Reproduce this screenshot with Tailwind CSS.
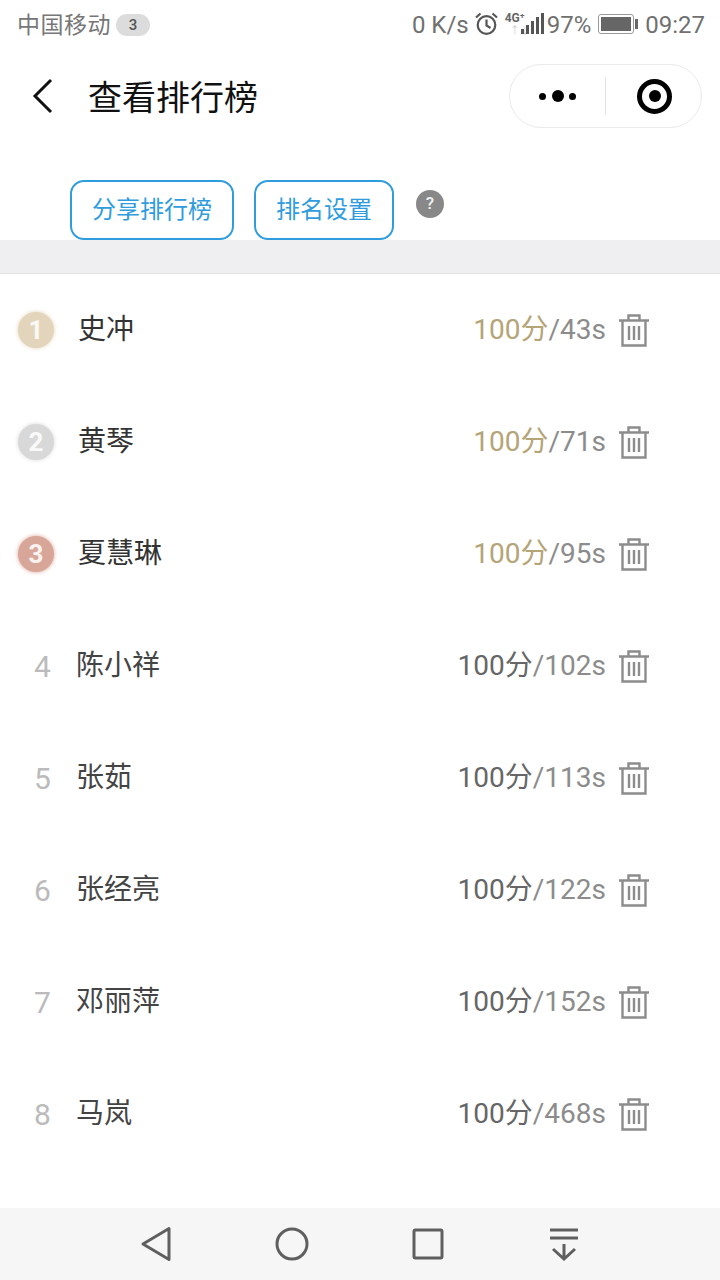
<!DOCTYPE html>
<html lang="zh-CN">
<head>
  <meta charset="UTF-8">
  <meta name="viewport" content="width=device-width, initial-scale=1.0">
  <title>查看排行榜</title>
  <script src="https://cdn.jsdelivr.net/npm/@tailwindcss/browser@4"></script>
</head>
<body class="bg-white font-['Roboto','Noto_Sans_CJK_SC',sans-serif]">
  <svg class="hidden">
    <symbol id="trash" viewBox="0 0 32 34">
      <path d="M1 7.5h30M10.5 7V2.5h11V7M4.5 8v24.5h23V8M11 13v14M16 13v14M21 13v14" fill="none" stroke="#8c8c8c" stroke-width="2.4"/>
    </symbol>
  </svg>
  <div class="w-[720px] h-[1280px] flex flex-col overflow-hidden">
    <!-- Status bar -->
    <div class="h-[48px] pt-[2px] flex items-center pl-[17px] pr-[15px] text-[24px] text-[#707070]">
      <span class="text-[23px] tracking-[0.5px] text-[#777777] translate-y-[1px]">中国移动</span>
      <span class="ml-[5px] w-[34px] h-[22px] rounded-full bg-[#dcdcdc] text-[15px] font-medium flex items-center justify-center text-[#555555]">3</span>
      <span class="ml-auto">0 K/s</span>
      <svg class="ml-[5px] -translate-y-[2px]" width="25" height="25" viewBox="0 0 25 25" fill="none" stroke="#555555" stroke-width="2.2">
        <circle cx="12.5" cy="14" r="8.8"/><path d="M12.5 8.5V14.5L16.5 17M2 6.5L6.5 2.5M23 6.5L18.5 2.5"/>
      </svg>
      <div class="ml-[4px] w-[41px] h-[26px] relative -translate-y-[3px]">
        <span class="absolute left-[2px] top-[3px] text-[12px] font-bold leading-[12px] text-[#666666]">4G⁺</span>
        <span class="absolute left-[7px] top-[17px] text-[10px] leading-[10px] text-[#cccccc]">↑↓</span>
        <div class="absolute right-0 bottom-[1px] flex items-end gap-[2px]">
          <i class="w-[3px] h-[5px] bg-[#555555]"></i><i class="w-[3px] h-[9px] bg-[#555555]"></i><i class="w-[3px] h-[13px] bg-[#555555]"></i><i class="w-[3px] h-[17px] bg-[#555555]"></i><i class="w-[3px] h-[21px] bg-[#555555]"></i>
        </div>
      </div>
      <span class="ml-[3px]">97%</span>
      <div class="ml-[7px] flex items-center -translate-y-[1px]">
        <div class="w-[36px] h-[20px] rounded-[3px] border border-[#999999] p-[2px]"><div class="w-full h-full bg-[#666666]"></div></div>
        <div class="ml-[1px] w-[3px] h-[10px] bg-[#666666]"></div>
      </div>
      <span class="ml-[7px]">09:27</span>
    </div>
    <!-- Title bar -->
    <div class="h-[97px] flex items-start">
      <svg class="ml-[32px] mt-[30px]" width="22" height="36" viewBox="0 0 22 36" fill="none" stroke="#111111" stroke-width="3"><path d="M19 2L3 18L19 34"/></svg>
      <span class="ml-[34px] mt-[25px] text-[34px] leading-[50px] text-[#111111]">查看排行榜</span>
      <div class="ml-auto mr-[18px] mt-[16px] w-[193px] h-[64px] rounded-full border border-[#eaeaea] flex items-center">
        <div class="w-[95px] flex items-center justify-center gap-[5.5px]">
          <i class="w-[7px] h-[7px] rounded-full bg-black"></i><i class="w-[12px] h-[12px] rounded-full bg-black"></i><i class="w-[7px] h-[7px] rounded-full bg-black"></i>
        </div>
        <div class="w-px h-[38px] bg-[#e2e2e2]"></div>
        <div class="flex-1 pl-[2px] flex items-center justify-center">
          <div class="w-[35px] h-[35px] rounded-full border-[5px] border-black flex items-center justify-center"><i class="w-[12px] h-[12px] rounded-full bg-black"></i></div>
        </div>
      </div>
    </div>
    <!-- Actions -->
    <div class="h-[95px] pt-[35px] pl-[70px] flex items-start">
      <button class="w-[164px] h-[60px] rounded-[14px] border-2 border-[#2f9cdd] text-[24px] text-[#2f9cdd]">分享排行榜</button>
      <button class="ml-[20px] w-[140px] h-[60px] rounded-[14px] border-2 border-[#2f9cdd] text-[24px] text-[#2f9cdd]">排名设置</button>
      <div class="ml-[22px] mt-[10px] w-[28px] h-[28px] rounded-full bg-[#888888] text-white/90 text-[17px] font-medium flex items-center justify-center">?</div>
    </div>
    <div class="h-[34px] bg-[#efeff1] border-b border-[#e2e2e2]"></div>
    <!-- Ranking -->
    <div class="flex-1 text-[28px]">
      <div class="h-[112px] flex items-center">
        <div class="ml-[18px] w-[36px] h-[36px] rounded-full bg-[#e3d5bb] shadow-[0_0_4px_#e3d5bb] text-white/85 text-[26px] font-bold flex items-center justify-center">1</div>
        <span class="ml-[24px] text-[#333333]">史冲</span>
        <span class="ml-auto text-[#b5a477]">100分</span><span class="text-[#8c8c8c]">/43s</span>
        <svg class="ml-[12px] mr-[70px]" width="32" height="34"><use href="#trash"/></svg>
      </div>
      <div class="h-[112px] flex items-center">
        <div class="ml-[18px] w-[36px] h-[36px] rounded-full bg-[#d8d8d8] shadow-[0_0_4px_#d8d8d8] text-white/85 text-[26px] font-bold flex items-center justify-center">2</div>
        <span class="ml-[24px] text-[#333333]">黄琴</span>
        <span class="ml-auto text-[#b5a477]">100分</span><span class="text-[#8c8c8c]">/71s</span>
        <svg class="ml-[12px] mr-[70px]" width="32" height="34"><use href="#trash"/></svg>
      </div>
      <div class="h-[112px] flex items-center">
        <div class="ml-[18px] w-[36px] h-[36px] rounded-full bg-[#d8a698] shadow-[0_0_4px_#d8a698] text-white/85 text-[26px] font-bold flex items-center justify-center">3</div>
        <span class="ml-[24px] text-[#333333]">夏慧琳</span>
        <span class="ml-auto text-[#b5a477]">100分</span><span class="text-[#8c8c8c]">/95s</span>
        <svg class="ml-[12px] mr-[70px]" width="32" height="34"><use href="#trash"/></svg>
      </div>
      <div class="h-[112px] flex items-center">
        <span class="w-[77px] pl-[34px] text-[30px] text-[#bbbbbb]">4</span>
        <span class="-ml-[1px] text-[#444444]">陈小祥</span>
        <span class="ml-auto text-[#666666]">100分</span><span class="text-[#8c8c8c]">/102s</span>
        <svg class="ml-[12px] mr-[70px]" width="32" height="34"><use href="#trash"/></svg>
      </div>
      <div class="h-[112px] flex items-center">
        <span class="w-[77px] pl-[34px] text-[30px] text-[#bbbbbb]">5</span>
        <span class="-ml-[1px] text-[#444444]">张茹</span>
        <span class="ml-auto text-[#666666]">100分</span><span class="text-[#8c8c8c]">/113s</span>
        <svg class="ml-[12px] mr-[70px]" width="32" height="34"><use href="#trash"/></svg>
      </div>
      <div class="h-[112px] flex items-center">
        <span class="w-[77px] pl-[34px] text-[30px] text-[#bbbbbb]">6</span>
        <span class="-ml-[1px] text-[#444444]">张经亮</span>
        <span class="ml-auto text-[#666666]">100分</span><span class="text-[#8c8c8c]">/122s</span>
        <svg class="ml-[12px] mr-[70px]" width="32" height="34"><use href="#trash"/></svg>
      </div>
      <div class="h-[112px] flex items-center">
        <span class="w-[77px] pl-[34px] text-[30px] text-[#bbbbbb]">7</span>
        <span class="-ml-[1px] text-[#444444]">邓丽萍</span>
        <span class="ml-auto text-[#666666]">100分</span><span class="text-[#8c8c8c]">/152s</span>
        <svg class="ml-[12px] mr-[70px]" width="32" height="34"><use href="#trash"/></svg>
      </div>
      <div class="h-[112px] flex items-center">
        <span class="w-[77px] pl-[34px] text-[30px] text-[#bbbbbb]">8</span>
        <span class="-ml-[1px] text-[#444444]">马岚</span>
        <span class="ml-auto text-[#666666]">100分</span><span class="text-[#8c8c8c]">/468s</span>
        <svg class="ml-[12px] mr-[70px]" width="32" height="34"><use href="#trash"/></svg>
      </div>
    </div>
    <!-- Navigation bar -->
    <div class="h-[72px] bg-[#f6f6f6] flex items-center pl-[140px]">
      <svg width="32" height="36" viewBox="0 0 32 36" fill="none" stroke="#5f5f5f" stroke-width="3" stroke-linejoin="round"><path d="M29 2.5V33.5L3 18Z"/></svg>
      <svg class="ml-[103px]" width="34" height="34" viewBox="0 0 34 34" fill="none" stroke="#5f5f5f" stroke-width="3"><circle cx="17" cy="17" r="15"/></svg>
      <svg class="ml-[103px]" width="32" height="32" viewBox="0 0 32 32" fill="none" stroke="#5f5f5f" stroke-width="3" stroke-linejoin="round"><rect x="2" y="2" width="28" height="28" rx="1.5"/></svg>
      <svg class="ml-[105px]" width="30" height="34" viewBox="0 0 30 34" fill="none" stroke="#5f5f5f" stroke-width="3"><path d="M1 3H29M1 11H29M15 17V32M4 22L15 32L26 22"/></svg>
    </div>
  </div>
</body>
</html>
